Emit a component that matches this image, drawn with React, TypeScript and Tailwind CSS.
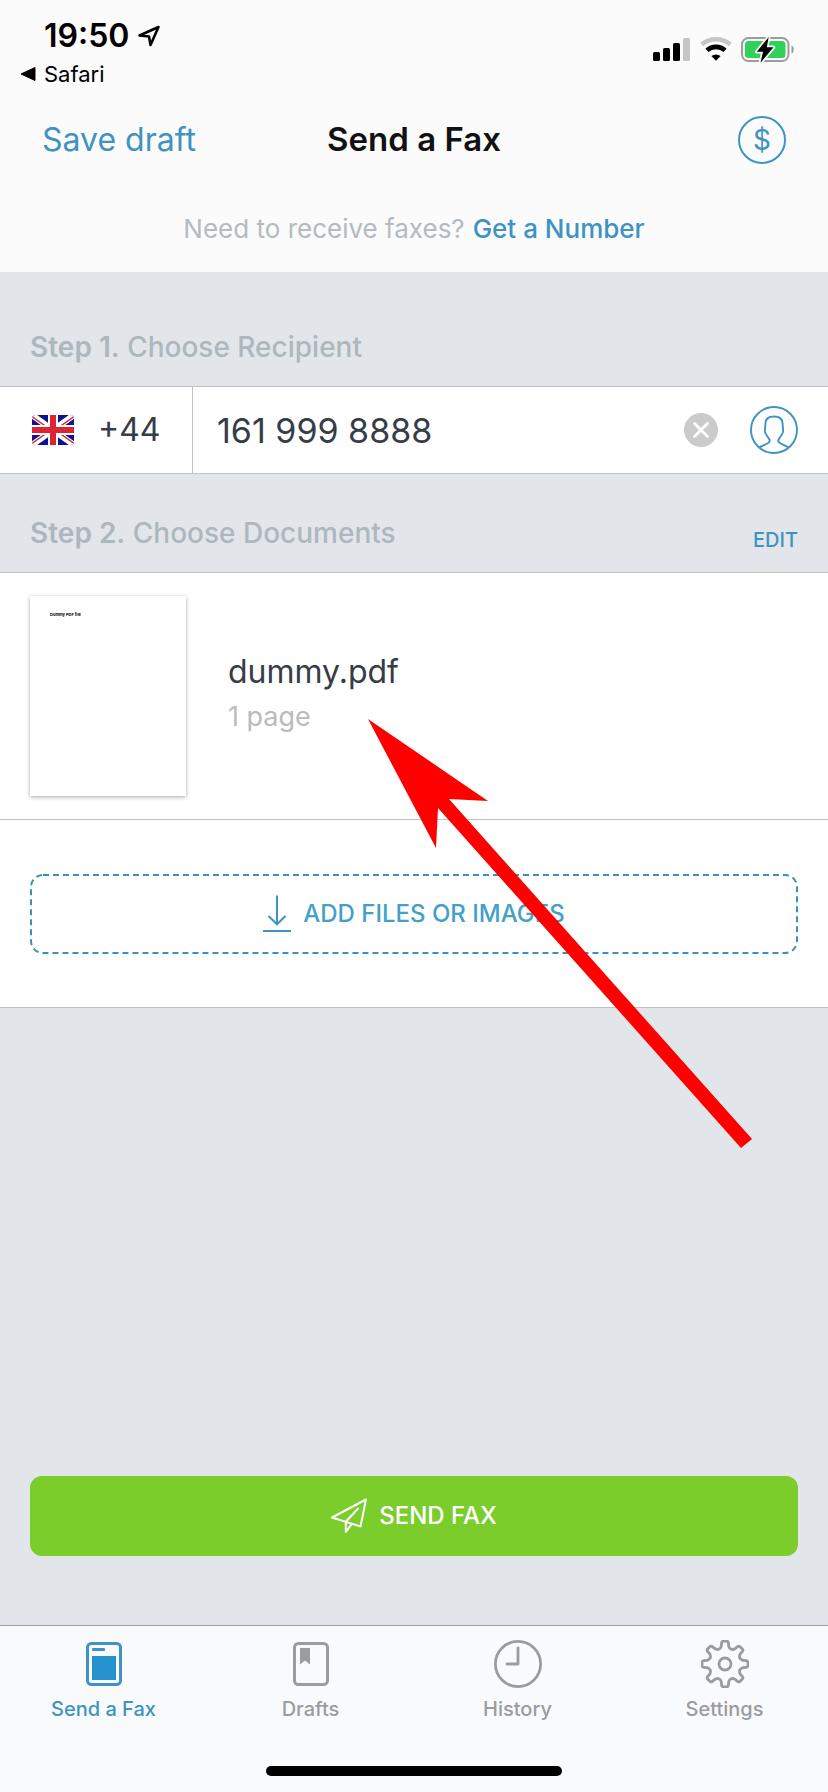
import React, { useState } from "react";

function LocationIcon() {
  return (
    <svg className="h-6 w-6" viewBox="0 0 24 24" fill="none" stroke="#000" strokeWidth="2.6" strokeLinejoin="round" aria-hidden="true">
      <path d="M2.5 11.5 21.500 3 13.500 21 12 12.500Z" />
    </svg>
  );
}

function StatusIcons() {
  return (
    <div className="flex items-center gap-2" aria-hidden="true">
      <svg className="h-7 w-[40px]" viewBox="0 0 40 28">
        <rect x="1" y="16" width="7" height="9" rx="1.6" />
        <rect x="11" y="12" width="7" height="13" rx="1.6" />
        <rect x="21" y="7" width="7" height="18" rx="1.6" />
        <rect x="31" y="2" width="7" height="23" rx="1.6" fill="#c6c6c6" />
      </svg>
      <svg className="h-7 w-[32px]" viewBox="0 0 32 28" fill="none" strokeWidth="4.6">
        <path d="M1.8 8.6A21.5 21.5 0 0 1 30.2 8.6" stroke="#c6c6c6" />
        <path d="M7 14.4A13.2 13.2 0 0 1 25 14.4" stroke="#000" />
        <path d="M11.4 20.1A7 7 0 0 1 20.6 20.1L16 24.8Z" fill="#000" />
      </svg>
      <svg className="h-7 w-[56px]" viewBox="0 0 56 28">
        <rect x="2" y="2" width="46.500" height="23" rx="6.500" fill="none" stroke="#9c9ca0" strokeWidth="2" />
        <path d="M51.500 9.500c3 .8 3 7.200 0 8Z" fill="#9c9ca0" />
        <rect x="5" y="5" width="40.500" height="17" rx="3.500" fill="#30d158" />
        <path d="M28.700 1 16.800 15.800H23L20.500 26.800 33.500 11.300H26.800Z" stroke="#fafafa" strokeWidth="3.600" paintOrder="stroke" strokeLinejoin="round" />
      </svg>
    </div>
  );
}

function FlagUK() {
  return (
    <svg className="h-[30px] w-[42px]" viewBox="0 0 42 30" aria-hidden="true">
      <defs>
        <clipPath id="flag">
          <rect width="42" height="30" rx="4" />
        </clipPath>
      </defs>
      <g clipPath="url(#flag)">
        <rect width="42" height="30" fill="#0b1392" />
        <path d="M0 0 42 30M42 0 0 30" stroke="#fff" strokeWidth="6" />
        <path d="M0 1.500 19 15M42 1.500 23 15M0 28.500 19 15M42 28.500 23 15" stroke="#dc2a38" strokeWidth="1.500" />
        <path d="M21 0V30M0 15H42" stroke="#fff" strokeWidth="10" />
        <path d="M21 0V30M0 15H42" stroke="#dc2432" strokeWidth="6" />
      </g>
    </svg>
  );
}

function ClearIcon() {
  return (
    <svg className="h-[34px] w-[34px]" viewBox="0 0 34 34" aria-hidden="true">
      <circle cx="17" cy="17" r="17" fill="#cbcbcb" />
      <path d="M10.500 10.500 23.500 23.500M23.500 10.500 10.500 23.500" stroke="#fff" strokeWidth="2.800" strokeLinecap="round" />
    </svg>
  );
}

function ContactIcon() {
  return (
    <svg className="h-12 w-12" viewBox="0 0 48 48" fill="none" stroke="#3f93c2" strokeWidth="1.900" strokeLinejoin="round" aria-hidden="true">
      <circle cx="24" cy="24" r="23" />
      <path d="M9.500 41.500C12 39.800 16 38.500 18.500 36.800 20 35.800 19.800 34 19 32.800 17.500 30.500 15 27.500 14.800 25L15.500 17C15.800 12.500 18.500 10.500 24 10.500S32.200 12.500 32.500 17L33.200 25C33 27.500 30.500 30.500 29 32.800 28.200 34 28 35.800 29.500 36.800 32 38.500 36 39.800 38.500 41.500" />
    </svg>
  );
}

function DownloadIcon() {
  return (
    <svg className="h-[38px] w-[28px]" viewBox="0 0 28 38" fill="none" stroke="#3f93c2" strokeWidth="2" aria-hidden="true">
      <path d="M14 .5V29M5.500 21 14 29.300 22.500 21M0 36H28" />
    </svg>
  );
}

function PlaneIcon() {
  return (
    <svg className="h-9 w-9" viewBox="0 0 36 36" fill="none" stroke="#fff" strokeWidth="2" strokeLinejoin="round" aria-hidden="true">
      <path d="M35 1.500 1 19.500 29.500 28.500ZM27.500 10 14.800 23.800V34L20.800 25.800" />
    </svg>
  );
}

function FaxIcon() {
  return (
    <svg className="h-12 w-12" viewBox="0 0 48 48" aria-hidden="true">
      <rect x="7.500" y="3.500" width="33" height="41" rx="4" fill="none" stroke="currentColor" strokeWidth="3" />
      <rect x="12" y="8" width="13" height="3" rx="1" fill="currentColor" />
      <rect x="12" y="16" width="24" height="24" fill="#2793ce" />
    </svg>
  );
}

function DraftsIcon() {
  return (
    <svg className="h-12 w-12" viewBox="0 0 48 48" aria-hidden="true">
      <rect x="7.500" y="3.500" width="33" height="41" rx="4" fill="none" stroke="currentColor" strokeWidth="3" />
      <path d="M13 8H23V24.500L18 20.500 13 24.500Z" fill="currentColor" />
    </svg>
  );
}

function HistoryIcon() {
  return (
    <svg className="h-12 w-12" viewBox="0 0 48 48" fill="none" stroke="currentColor" strokeWidth="2.800" strokeLinecap="round" strokeLinejoin="round" aria-hidden="true">
      <circle cx="24" cy="24" r="22.600" />
      <path d="M24 8V24H13" />
    </svg>
  );
}

function toothPoint(radius: number, degrees: number) {
  const a = (degrees * Math.PI) / 180;
  return `${(24 + radius * Math.sin(a)).toFixed(2)} ${(24 - radius * Math.cos(a)).toFixed(2)}`;
}

const gearPath =
  Array.from({ length: 8 }, (_, i) => {
    const c = i * 45;
    const start = i === 0 ? `M${toothPoint(18, c - 12)}` : "";
    return `${start}L${toothPoint(21.5, c - 9)}Q${toothPoint(23, c - 8)} ${toothPoint(23, c - 4)}L${toothPoint(23, c + 4)}Q${toothPoint(23, c + 8)} ${toothPoint(21.5, c + 9)}L${toothPoint(18, c + 12)}Q${toothPoint(14.2, c + 22.5)} ${toothPoint(18, c + 33)}`;
  }).join("") + "Z";

function SettingsIcon() {
  return (
    <svg className="h-12 w-12" viewBox="0 0 48 48" fill="none" stroke="currentColor" strokeWidth="2.800" strokeLinejoin="round" aria-hidden="true">
      <path d={gearPath} />
      <circle cx="24" cy="24" r="6" />
    </svg>
  );
}

const tabs = [
  { label: "Send a Fax", Icon: FaxIcon, active: true },
  { label: "Drafts", Icon: DraftsIcon, active: false },
  { label: "History", Icon: HistoryIcon, active: false },
  { label: "Settings", Icon: SettingsIcon, active: false },
];

export default function App() {
  const [phone, setPhone] = useState("161 999 8888");

  return (
    <div className="flex min-h-screen flex-col bg-[#e2e6ea] font-['Inter','Liberation_Sans',sans-serif] text-[#353d47]">
      <header className="bg-[#fbfbfb]">
        <div className="flex h-24 items-start justify-between pr-8 pl-5 text-black">
          <div className="pt-4">
            <div className="flex items-center gap-2 pl-6">
              <span className="text-[32px] leading-10 font-semibold">19:50</span>
              <LocationIcon />
            </div>
            <a href="#safari" className="flex items-center gap-2 text-[22px] leading-9">
              <svg className="h-4 w-4" viewBox="0 0 16 16" aria-hidden="true">
                <path d="M1 8 15 1.500V14.500Z" stroke="#000" strokeLinejoin="round" />
              </svg>
              Safari
            </a>
          </div>
          <div className="pt-9">
            <StatusIcons />
          </div>
        </div>
        <div className="grid h-[88px] grid-cols-[1fr_auto_1fr] items-center px-[42px]">
          <button type="button" className="justify-self-start text-[32px] text-[#3f93c2]">Save draft</button>
          <h1 className="text-[33px] font-semibold text-[#111]">Send a Fax</h1>
          <button type="button" aria-label="Credits" className="flex h-12 w-12 items-center justify-center justify-self-end rounded-full border-2 border-[#3f93c2] text-[28px] text-[#3f93c2]">$</button>
        </div>
        <p className="flex h-[88px] items-center justify-center gap-2 text-[26px] text-[#b4bac1]">
          Need to receive faxes?
          <a href="#number" className="font-medium text-[#3f93c2]">Get a Number</a>
        </p>
      </header>

      <main className="flex flex-1 flex-col">
        <h2 className="px-[30px] pt-14 pb-5 text-[28px] leading-[38px] font-medium text-[#adb7bf]">
          <span className="font-semibold">Step 1.</span> Choose Recipient
        </h2>
        <section className="flex h-[88px] border-y border-[#bfc2c5] bg-white">
          <button type="button" aria-label="Country code" className="flex w-[193px] shrink-0 items-center gap-6 border-r border-[#bfc2c5] pl-8 text-[32px]">
            <FlagUK />
            +44
          </button>
          <div className="flex min-w-0 flex-1 items-center pr-[30px] pl-6">
            <input type="tel" aria-label="Fax number" value={phone} onChange={(e) => setPhone(e.target.value)} className="min-w-0 flex-1 text-[34px] outline-none" />
            <button type="button" aria-label="Clear number" onClick={() => setPhone("")} className="mr-8">
              <ClearIcon />
            </button>
            <button type="button" aria-label="Contacts">
              <ContactIcon />
            </button>
          </div>
        </section>

        <div className="flex items-end justify-between px-[30px] pt-10 pb-5">
          <h2 className="text-[28px] leading-[38px] font-medium text-[#adb7bf]">
            <span className="font-semibold">Step 2.</span> Choose Documents
          </h2>
          <button type="button" className="text-[20px] leading-6 font-medium text-[#3f93c2]">EDIT</button>
        </div>
        <section className="relative border-y border-[#bfc2c5] bg-white">
          <div className="flex items-center gap-[42px] border-b border-[#bfc2c5] px-[30px] py-[23px]">
            <div className="h-[200px] w-[156px] bg-white pt-4 pl-5 text-[4px] leading-[6px] font-bold text-black shadow-[0_1px_4px_rgba(0,0,0,0.35)]">
              Dummy PDF file
            </div>
            <div className="pb-1">
              <div className="text-[32px] leading-[46px]">dummy.pdf</div>
              <div className="text-[27px] leading-[44px] text-[#b8bbbf]">1 page</div>
            </div>
          </div>
          <div className="px-[30px] pt-[54px] pb-[53px]">
            <button type="button" className="relative flex h-20 w-full items-center justify-center gap-3 text-[24px] font-medium text-[#45a0c8]">
              <svg className="absolute inset-0 h-full w-full overflow-visible" fill="none" aria-hidden="true">
                <rect className="h-[calc(100%-2px)] w-[calc(100%-2px)]" x="1" y="1" rx="12" stroke="#3c8fbf" strokeWidth="2" strokeDasharray="6 4" />
              </svg>
              <DownloadIcon />
              ADD FILES OR IMAGES
            </button>
          </div>
          <svg className="pointer-events-none absolute top-[146px] left-[368px] z-10 h-[429px] w-[384px]" viewBox="0 0 384 429" aria-hidden="true">
            <path d="M0 0 120 82 81 80 384 420 373 429 70 89 68 129Z" fill="#f00" />
          </svg>
        </section>

        <div className="mt-auto px-[30px] pt-10 pb-[69px]">
          <button type="button" className="flex h-20 w-full items-center justify-center gap-3 rounded-xl bg-[#7acd2a] text-[24px] font-medium text-white">
            <PlaneIcon />
            SEND FAX
          </button>
        </div>
      </main>

      <nav className="border-t border-[#9b9ea1] bg-[#f9fafc] pt-[14px] pb-4">
        <div className="grid grid-cols-4">
          {tabs.map(({ label, Icon, active }) => (
            <a key={label} href="#tab" aria-current={active ? "page" : undefined} className={`flex flex-col items-center gap-2 text-[20px] leading-[26px] font-medium ${active ? "text-[#3f93c2]" : "text-[#9a9c9e]"}`}>
              <Icon />
              {label}
            </a>
          ))}
        </div>
        <div className="mx-auto mt-11 h-[10px] w-[296px] rounded-full bg-black" />
      </nav>
    </div>
  );
}
